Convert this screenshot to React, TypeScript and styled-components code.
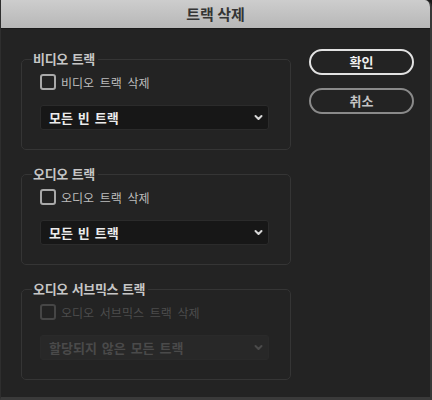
import React from "react";
import styled, { createGlobalStyle } from "styled-components";

const Global = createGlobalStyle`
  html, body { margin: 0; padding: 0; background: #1b1b1b; }
  body { width: 432px; height: 400px; overflow: hidden; }
  * { box-sizing: border-box; }
`;

const FONT = `"Noto Sans CJK KR", "Noto Sans", sans-serif`;

const Window = styled.div`
  width: 432px;
  height: 400px;
  display: flex;
  flex-direction: column;
  background: #232323;
  border-radius: 0 7px 0 0;
  overflow: hidden;
  font-family: ${FONT};
  border-left: 1px solid #2e2e2e;
  border-right: 2px solid #383838;
  border-bottom: 3px solid #3a3a3a;
`;

const TitleBar = styled.div`
  height: 29px;
  flex: none;
  display: flex;
  align-items: center;
  justify-content: center;
  background: linear-gradient(#cdcdcd, #b7b7b7);
  border-bottom: 1px solid #1a1a1a;
  color: #353535;
  font-size: 15px;
  font-weight: 700;
  padding-bottom: 1px;
`;

const Body = styled.div`
  flex: 1;
  display: flex;
  gap: 18px;
  padding: 20px 0 0 20px;
`;

const LeftColumn = styled.div`
  display: flex;
  flex-direction: column;
  gap: 16px;
  padding-top: 2px;
`;

const Group = styled.fieldset`
  width: 270px;
  margin: 0;
  padding: 0 21px 19px 18px;
  border: 1px solid #353535;
  border-radius: 5px;
  min-width: 0;
`;

const Legend = styled.legend`
  margin-left: -8px;
  padding: 0 3px 0 1px;
  font-size: 13px;
  line-height: 16px;
  font-weight: 700;
  letter-spacing: -0.3px;
  word-spacing: 1px;
  color: #c6c6c6;
`;

const CheckRow = styled.label<{ $disabled?: boolean }>`
  display: flex;
  align-items: center;
  gap: 5px;
  margin-top: 7px;
  height: 16px;
  font-size: 12px;
  word-spacing: 3px;
  color: ${(p) => (p.$disabled ? "#4c4c4c" : "#bcbcbc")};
`;

const Box = styled.span<{ $disabled?: boolean }>`
  width: 16px;
  height: 16px;
  flex: none;
  border: 2px solid ${(p) => (p.$disabled ? "#464646" : "#a9a9a9")};
  border-radius: 3px;
  background: transparent;
`;

const Select = styled.div<{ $disabled?: boolean }>`
  margin-top: 15px;
  height: 25px;
  width: 229px;
  display: flex;
  align-items: center;
  justify-content: space-between;
  padding: 0 5px 0 8px;
  border-radius: 3px;
  background: ${(p) => (p.$disabled ? "#282828" : "#171717")};
  border: 1px solid ${(p) => (p.$disabled ? "#2a2a2a" : "#2b2b2b")};
  color: ${(p) => (p.$disabled ? "#4a4a4a" : "#ececec")};
  font-size: 13px;
  font-weight: 700;
  word-spacing: 2px;
`;

const Chevron = styled.svg<{ $disabled?: boolean }>`
  width: 9px;
  height: 7px;
  color: ${(p) => (p.$disabled ? "#4a4a4a" : "#d8d8d8")};
`;

const RightColumn = styled.div`
  display: flex;
  flex-direction: column;
  gap: 13px;
`;

const Button = styled.button<{ $primary?: boolean }>`
  width: 105px;
  height: 26px;
  border-radius: 13px;
  background: transparent;
  border: 2px solid ${(p) => (p.$primary ? "#e2e2e2" : "#8a8a8a")};
  color: ${(p) => (p.$primary ? "#f0f0f0" : "#c4c4c4")};
  font-family: ${FONT};
  font-size: 13px;
  font-weight: 700;
  padding: 0 0 1px;
`;

const ChevronIcon = ({ disabled }: { disabled?: boolean }) => (
  <Chevron $disabled={disabled} viewBox="0 0 9 7">
    <path d="M1.5 2 L4.5 5 L7.5 2" fill="none" stroke="currentColor" strokeWidth="2" strokeLinecap="round" strokeLinejoin="round" />
  </Chevron>
);

const TrackGroup = ({ legend, check, option, disabled }: { legend: string; check: string; option: string; disabled?: boolean }) => (
  <Group>
    <Legend>{legend}</Legend>
    <CheckRow $disabled={disabled}>
      <Box $disabled={disabled} />
      {check}
    </CheckRow>
    <Select $disabled={disabled}>
      <span>{option}</span>
      <ChevronIcon disabled={disabled} />
    </Select>
  </Group>
);

export default function App() {
  return (
    <>
      <Global />
      <Window>
        <TitleBar>트랙 삭제</TitleBar>
        <Body>
          <LeftColumn>
            <TrackGroup legend="비디오 트랙" check="비디오 트랙 삭제" option="모든 빈 트랙" />
            <TrackGroup legend="오디오 트랙" check="오디오 트랙 삭제" option="모든 빈 트랙" />
            <TrackGroup legend="오디오 서브믹스 트랙" check="오디오 서브믹스 트랙 삭제" option="할당되지 않은 모든 트랙" disabled />
          </LeftColumn>
          <RightColumn>
            <Button $primary>확인</Button>
            <Button>취소</Button>
          </RightColumn>
        </Body>
      </Window>
    </>
  );
}
